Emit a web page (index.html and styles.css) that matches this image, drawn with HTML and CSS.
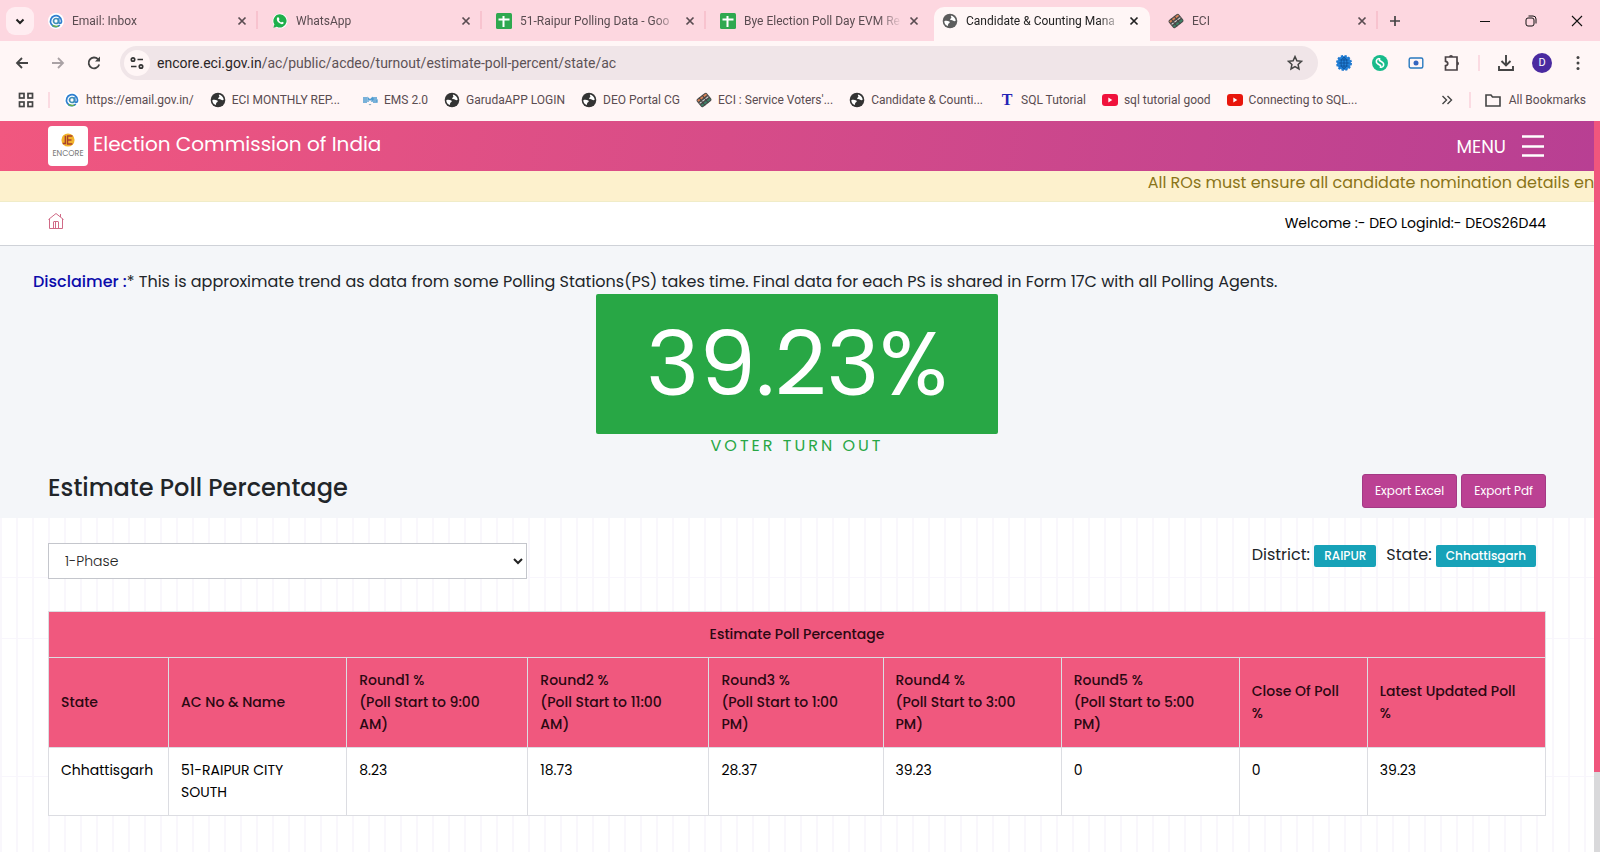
FILE: index.html
```html
<!DOCTYPE html>
<html lang="en">
<head>
<meta charset="utf-8">
<title>Candidate &amp; Counting Management</title>
<link rel="stylesheet" href="styles.css">
</head>
<body>
<svg class="sprite" aria-hidden="true">
  <symbol id="x" viewBox="0 0 12 12"><path d="M2.500 2.500l7 7M9.500 2.500l-7 7" fill="none" stroke="currentColor" stroke-width="1.700"/></symbol>
  <symbol id="at" viewBox="0 0 16 16"><circle cx="8" cy="8" r="8" fill="#fff"/><path d="M11.800 12.200A5.500 5.500 0 1 1 13.500 8c0 1.600-.7 2.400-1.600 2.400S10.700 9.600 10.700 8.600V5.300" fill="none" stroke="#2f7fd0" stroke-width="1.700"/><circle cx="8" cy="8" r="2.500" fill="none" stroke="#3e8fb8" stroke-width="1.700"/><path d="M4.500 12.300q3 1.800 6 .9" fill="none" stroke="#69b04a" stroke-width="1.400"/></symbol>
  <symbol id="globe" viewBox="0 0 16 16"><circle cx="8" cy="8" r="7.300" fill="currentColor"/><path d="M2.300 8.200C4 7.400 6 7.900 7.300 8.500c1 .6.400 1.500-.6 1.900-.9.500-.4 1.400-.9 2.700C3.500 12.300 2.300 10.400 2.300 8.200zM9 2.400c2.700.6 4.500 2.700 4.700 5.300-1.100.9-2 .2-2.900-.2-1-.3-2.300.2-2.700-.9C7.900 5.500 9.600 5.700 9.400 4.600 9.200 3.700 8.600 3.300 9 2.400z" fill="#fff"/></symbol>
  <symbol id="sheet" viewBox="0 0 16 16"><rect width="16" height="16" rx="1.500" fill="#2fa84f"/><path d="M2.500 6.500h11M7.500 3v11" stroke="#fff" stroke-width="2"/></symbol>
  <symbol id="wa" viewBox="0 0 16 16"><circle cx="8" cy="8" r="7.500" fill="#fff"/><path d="M8 1.300a6.600 6.600 0 1 1-3.200 12.400L1.400 14.700l1-3.300A6.600 6.600 0 0 1 8 1.300z" fill="#1faf4b"/><path d="M5.700 4.300c-1.800 1.500-.5 4 .9 5.300s3.800 2.500 5 .7c.3-.5 0-.8-.4-1l-1.200-.6-.9.800C8.200 9.200 7.200 8.200 6.800 7.100l.7-.9-.6-1.500c-.2-.5-.7-.7-1.200-.4z" fill="#fff"/></symbol>
  <symbol id="eci" viewBox="0 0 16 16"><g transform="rotate(-38 8 8)"><rect x="1.500" y="3" width="13" height="10" rx="2" fill="#4b4b4b"/><path d="M2.500 5h11" stroke="#d98256" stroke-width="1.800"/><path d="M2.500 8h11" stroke="#ddd" stroke-width="1"/><path d="M2.500 11h11" stroke="#3b8468" stroke-width="1.800"/><path d="M5.500 3v10M9.500 3v10" stroke="#444" stroke-width="1"/></g></symbol>
  <symbol id="yt" viewBox="0 0 16 12"><rect width="16" height="12" rx="3" fill="currentColor"/><path d="M6.300 3.500v5l4-2.500z" fill="#fff"/></symbol>
</svg>

<header class="browser">
  <div class="tabstrip">
    <button class="tabsearch" aria-label="Search tabs"><svg width="12" height="12" viewBox="0 0 12 12"><path d="M2.500 4.500L6 8l3.500-3.500" fill="none" stroke="#222" stroke-width="2"/></svg></button>
    <div class="tab"><svg class="fav"><use href="#at"/></svg><span class="tabtext">Email: Inbox</span><button class="tabclose" aria-label="Close"><svg><use href="#x"/></svg></button></div>
    <div class="tab"><svg class="fav"><use href="#wa"/></svg><span class="tabtext">WhatsApp</span><button class="tabclose" aria-label="Close"><svg><use href="#x"/></svg></button></div>
    <div class="tab"><svg class="fav"><use href="#sheet"/></svg><span class="tabtext">51-Raipur Polling Data - Goo</span><button class="tabclose" aria-label="Close"><svg><use href="#x"/></svg></button></div>
    <div class="tab nosep"><svg class="fav"><use href="#sheet"/></svg><span class="tabtext">Bye Election Poll Day EVM Re</span><button class="tabclose" aria-label="Close"><svg><use href="#x"/></svg></button></div>
    <div class="tab active"><svg class="fav grey"><use href="#globe"/></svg><span class="tabtext">Candidate &amp; Counting Mana</span><button class="tabclose" aria-label="Close"><svg><use href="#x"/></svg></button></div>
    <div class="tab"><svg class="fav"><use href="#eci"/></svg><span class="tabtext">ECI</span><button class="tabclose" aria-label="Close"><svg><use href="#x"/></svg></button></div>
    <button class="newtab" aria-label="New tab"><svg width="14" height="14" viewBox="0 0 14 14"><path d="M7 2v10M2 7h10" stroke="#444" stroke-width="1.700"/></svg></button>
    <div class="wincontrols">
      <button aria-label="Minimise"><svg width="14" height="14" viewBox="0 0 14 14"><path d="M2 7.500h10" stroke="#111"/></svg></button>
      <button aria-label="Restore"><svg width="14" height="14" viewBox="0 0 14 14" fill="none" stroke="#111"><rect x="2" y="4" width="8" height="8" rx="2"/><path d="M4.500 2h4.500a3 3 0 0 1 3 3v4.500"/></svg></button>
      <button aria-label="Close window"><svg width="14" height="14" viewBox="0 0 14 14"><path d="M2 2l10 10M12 2L2 12" stroke="#111" stroke-width="1.100"/></svg></button>
    </div>
  </div>

  <div class="toolbar">
    <button class="tool" aria-label="Back"><svg width="16" height="16" viewBox="0 0 16 16"><path d="M14 8H3M8 3L3 8l5 5" fill="none" stroke="#444" stroke-width="1.800"/></svg></button>
    <button class="tool" aria-label="Forward"><svg width="16" height="16" viewBox="0 0 16 16"><path d="M2 8h11M8 3l5 5-5 5" fill="none" stroke="#aaa2a5" stroke-width="1.800"/></svg></button>
    <button class="tool" aria-label="Reload"><svg width="16" height="16" viewBox="0 0 16 16"><path d="M13.200 9.500A5.400 5.400 0 1 1 12 4.200L13 5.300" fill="none" stroke="#444" stroke-width="1.800"/><path d="M14 1.500v5H9z" fill="#444"/></svg></button>
    <div class="omnibox">
      <button class="siteinfo" aria-label="Site information"><svg width="16" height="16" viewBox="0 0 16 16" fill="none" stroke="#333" stroke-width="1.700"><circle cx="4" cy="4.500" r="1.700"/><path d="M8.500 4.500H14M2 11.500h5.500"/><circle cx="12" cy="11.500" r="1.700"/></svg></button>
      <p class="url">encore.eci.gov.in<span>/ac/public/acdeo/turnout/estimate-poll-percent/state/ac</span></p>
      <button class="star" aria-label="Bookmark"><svg width="16" height="16" viewBox="0 0 16 16"><path d="M8 1.600l1.900 4.200 4.600.5-3.400 3.100.9 4.600L8 11.700 4 14l.9-4.600L1.500 6.300l4.600-.5z" fill="none" stroke="#444" stroke-width="1.500"/></svg></button>
    </div>
    <div class="extensions">
      <button class="tool" aria-label="Globe extension"><svg width="16" height="16" viewBox="0 0 16 16"><circle cx="8" cy="8" r="7" fill="#2484dc" stroke="#1f78cf" stroke-width="2" stroke-dasharray="2.200 1.500"/><path d="M2.500 8h11M3.500 5h9M3.500 11h9M8 2.500v11" stroke="#0d4d92" fill="none" stroke-width=".8"/><ellipse cx="8" cy="8" rx="3" ry="5.500" fill="none" stroke="#0d4d92" stroke-width=".8"/></svg></button>
      <button class="tool" aria-label="Sync extension"><svg width="16" height="16" viewBox="0 0 16 16"><circle cx="8" cy="8" r="8" fill="#18bb8b"/><path d="M7 3.500C4 4 3.200 7.500 6 9l2.500 1.500V13M9 12.500c3-.5 3.800-4 1-5.500L7.500 5.500V3" fill="none" stroke="#fff" stroke-width="1.600"/></svg></button>
      <button class="tool" aria-label="Capture extension"><svg width="16" height="16" viewBox="0 0 16 16"><rect x="1.200" y="3" width="13.600" height="10" rx="1.500" fill="none" stroke="#2a7abf" stroke-width="1.400"/><circle cx="8" cy="8" r="2.500" fill="#3465c0"/></svg></button>
      <button class="tool" aria-label="Extensions"><svg width="18" height="18" viewBox="0 0 18 18"><path d="M2.500 3h11.500v13H2.500v-4.300c3-.4 3-4 0-4.400z" fill="none" stroke="#4a4245" stroke-width="1.700"/><path d="M6 3a2 2 0 0 1 4 0zM14 7.500a2 2 0 0 1 0 4z" fill="#4a4245"/></svg></button>
      <i class="divider"></i>
      <button class="tool" aria-label="Downloads"><svg width="18" height="18" viewBox="0 0 18 18"><path d="M9 1v10M4.500 7L9 11.500 13.500 7M2 12v4h14v-4" fill="none" stroke="#444" stroke-width="1.900"/></svg></button>
      <button class="tool avatar" aria-label="Profile">D</button>
      <button class="tool" aria-label="Browser menu"><svg width="16" height="16" viewBox="0 0 16 16" fill="#444"><circle cx="8" cy="2.500" r="1.500"/><circle cx="8" cy="8" r="1.500"/><circle cx="8" cy="13.500" r="1.500"/></svg></button>
    </div>
  </div>

  <nav class="bookmarks">
    <button class="tool" aria-label="Apps"><svg width="16" height="16" viewBox="0 0 16 16" fill="none" stroke="#444" stroke-width="1.700"><rect x="1.500" y="1.500" width="4.500" height="4.500"/><rect x="10" y="1.500" width="4.500" height="4.500"/><rect x="1.500" y="10" width="4.500" height="4.500"/><rect x="10" y="10" width="4.500" height="4.500"/></svg></button>
    <i class="divider"></i>
    <a href="#"><svg class="bico"><use href="#at"/></svg>https://email.gov.in/</a>
    <a href="#"><svg class="bico"><use href="#globe"/></svg>ECI MONTHLY REP...</a>
    <a href="#" class="late"><svg class="bico" viewBox="0 0 16 16"><path d="M1 6h4M1 8h4M1 10h4M6 10V6l2 2 2-2v4M15 6h-4v2h4v2h-4" fill="none" stroke="#4d9bd0" stroke-width="1.300"/><path d="M6.500 12h3L8 13.500z" fill="#8ab"/></svg>EMS 2.0</a>
    <a href="#"><svg class="bico"><use href="#globe"/></svg>GarudaAPP LOGIN</a>
    <a href="#"><svg class="bico"><use href="#globe"/></svg>DEO Portal CG</a>
    <a href="#"><svg class="bico"><use href="#eci"/></svg>ECI : Service Voters'...</a>
    <a href="#"><svg class="bico"><use href="#globe"/></svg>Candidate &amp; Counti...</a>
    <a href="#"><b class="tmark">T</b>SQL Tutorial</a>
    <a href="#"><svg class="bico crimson"><use href="#yt"/></svg>sql tutorial good</a>
    <a href="#"><svg class="bico red"><use href="#yt"/></svg>Connecting to SQL...</a>
    <div class="bookend">
      <button class="tool" aria-label="More bookmarks"><svg width="12" height="12" viewBox="0 0 12 12"><path d="M1.500 2l4 4-4 4M6.500 2l4 4-4 4" fill="none" stroke="#444" stroke-width="1.400"/></svg></button>
      <i class="divider"></i>
      <a href="#"><svg class="bico" viewBox="0 0 16 16"><path d="M1 3h5l1.500 2H15v9H1z" fill="none" stroke="#444" stroke-width="1.600"/></svg>All Bookmarks</a>
    </div>
  </nav>
</header>

<div class="viewport">
  <div class="page">
    <header class="masthead">
      <a class="logo" href="#" aria-label="Encore">
        <svg width="14" height="14" viewBox="0 0 16 16"><circle cx="8" cy="8" r="7.500" fill="#f2b32b"/><path d="M5 3v9H2M7 3.500h6M7 8h5M7 12.500h6M7.500 3v10" fill="none" stroke="#a8412c" stroke-width="1.600"/></svg>
        <span>ENCORE</span>
      </a>
      <span class="org">Election Commission of India</span>
      <button class="menu">MENU <svg width="24" height="24" viewBox="0 0 24 24"><path d="M0 2.500h22M0 12.500h22M0 21.500h22" stroke="#fff" stroke-width="2.500"/></svg></button>
    </header>

    <div class="notice"><p>All ROs must ensure all candidate nomination details en</p></div>

    <div class="welcome">
      <a href="#" aria-label="Home"><svg width="16" height="18" viewBox="0 0 16 18" fill="none" stroke="#d06a86"><path d="M.5 7.500l7.500-6 7.500 6M1.500 7v9.500h13V7M12.500 5V2M5.500 16.500V10M7.500 16.500V9.500M10.500 16.500V10M5.500 9.500h5"/></svg></a>
      <p>Welcome :- DEO LoginId:- DEOS26D44</p>
    </div>

    <section class="summary">
      <p class="disclaimer"><b>Disclaimer :</b>* This is approximate trend as data from some Polling Stations(PS) takes time. Final data for each PS is shared in Form 17C with all Polling Agents.</p>
      <div class="turnout"><strong>39.23%</strong><span>VOTER TURN OUT</span></div>
      <div class="titlebar">
        <h1>Estimate Poll Percentage</h1>
        <div class="exports"><button>Export Excel</button><button>Export Pdf</button></div>
      </div>
    </section>

    <main class="content">
      <div class="filters">
        <select aria-label="Phase"><option>1-Phase</option></select>
        <p class="place"><span>District: <mark>RAIPUR</mark></span><span>State: <mark>Chhattisgarh</mark></span></p>
      </div>
      <table>
        <colgroup><col class="c-state"><col class="c-name"><col class="c-round"><col class="c-round"><col class="c-third"><col class="c-name"><col class="c-name"><col class="c-close"><col class="c-name"></colgroup>
        <thead>
          <tr><th colspan="9" class="caption">Estimate Poll Percentage</th></tr>
          <tr>
            <th>State</th><th>AC No &amp; Name</th>
            <th>Round1 %<br>(Poll Start to 9:00<br>AM)</th>
            <th>Round2 %<br>(Poll Start to 11:00<br>AM)</th>
            <th>Round3 %<br>(Poll Start to 1:00<br>PM)</th>
            <th>Round4 %<br>(Poll Start to 3:00<br>PM)</th>
            <th>Round5 %<br>(Poll Start to 5:00<br>PM)</th>
            <th>Close Of Poll<br>%</th><th>Latest Updated Poll<br>%</th>
          </tr>
        </thead>
        <tbody>
          <tr><td>Chhattisgarh</td><td>51-RAIPUR CITY<br>SOUTH</td><td>8.23</td><td>18.73</td><td>28.37</td><td>39.23</td><td>0</td><td>0</td><td>39.23</td></tr>
        </tbody>
      </table>
    </main>
  </div>
  <div class="scrollbar"><i></i></div>
</div>
</body>
</html>
```

FILE: styles.css
```css
* { box-sizing: border-box; }
html, body { height: 100%; }
body {
  margin: 0;
  display: flex;
  flex-direction: column;
  overflow: hidden;
  font-family: Poppins, Inter, sans-serif;
  color: #212529;
}
p, h1 { margin: 0; }
button { border: 0; padding: 0; background: none; font: inherit; color: inherit; }
a { color: inherit; text-decoration: none; }
.sprite { position: absolute; width: 0; height: 0; }

/* Browser frame */
.browser {
  flex: none;
  background: #fff6f6;
  color: #5a4c51;
  font: 12px/16px "Segoe UI", Roboto, sans-serif;
}
.tabstrip { display: flex; align-items: center; height: 41px; padding-left: 6px; background: #fdd7e0; }
.tabsearch {
  width: 28px; height: 28px;
  display: grid; place-items: center;
  border-radius: 9px;
  background: #ffedf1;
}
.tab {
  width: 224px; height: 34px;
  display: flex; align-items: center;
  margin-top: 7px; padding: 0 8px 7px 14px;
  background: linear-gradient(#f8c3cf, #f8c3cf) right 4px / 2px 18px no-repeat;
}
.tabclose, .fav { flex: none; }
.tab.nosep { background: none; }
.tab.active {
  width: 216px;
  background: #fff6f6;
  color: #222;
  border-radius: 10px 10px 0 0;
  margin-left: 4px; margin-right: 4px;
  padding-left: 8px;
}
.fav { width: 16px; height: 16px; margin-right: 8px; }
.fav.grey { color: #5c5c5c; }
.tabtext {
  flex: 1;
  overflow: hidden;
  white-space: nowrap;
  margin-right: 4px;
  -webkit-mask-image: linear-gradient(90deg, #000 85%, transparent);
  mask-image: linear-gradient(90deg, #000 85%, transparent);
}
.tabclose { width: 16px; height: 16px; display: grid; place-items: center; }
.tabclose svg { width: 12px; height: 12px; }
.newtab { width: 34px; height: 28px; display: grid; place-items: center; }
.wincontrols { display: flex; margin-left: auto; }
.wincontrols button { width: 46px; height: 40px; display: grid; place-items: center; }

.toolbar { display: flex; align-items: center; height: 44px; padding: 0 4px; }
.tool { width: 36px; height: 32px; display: grid; place-items: center; flex: none; }
.omnibox {
  flex: 1;
  display: flex; align-items: center;
  height: 34px;
  margin-left: 8px; padding: 0 10px 0 4px;
  border-radius: 17px;
  background: #f0e5e8;
}
.siteinfo { width: 26px; height: 26px; display: grid; place-items: center; border-radius: 50%; background: #fff6f6; }
.url { flex: 1; margin-left: 7px; font-size: 14px; color: #2a2426; }
.url span { color: #5d5256; }
.star { width: 26px; height: 26px; display: grid; place-items: center; }
.extensions { display: flex; align-items: center; margin-left: 8px; }
.divider { width: 2px; height: 16px; background: #fbdbe2; flex: none; }
.extensions .divider { margin: 0 8px; }
.avatar { width: 20px; height: 20px; margin: 0 8px; border-radius: 50%; background: #4a2aa0; color: #fff; font-size: 11px; }

.bookmarks { display: flex; align-items: center; height: 36px; padding: 0 14px 6px 8px; white-space: nowrap; }
.bookmarks .divider { margin: 0 14px 0 4px; }
.bookmarks a { display: flex; align-items: center; margin-right: 16px; }
.bookmarks a.late { margin-left: 6px; }
.bico { width: 16px; height: 16px; margin-right: 6px; flex: none; color: #333; }
.crimson { color: #f0123c; }
.red { color: #e8160c; }
.tmark { width: 16px; margin-right: 6px; text-align: center; font: bold 16px/16px "Liberation Serif", serif; color: #2323b5; }
.bookend { display: flex; align-items: center; margin-left: auto; }
.bookend .bico { margin-right: 8px; }
.bookmarks .bookend a { margin-right: 0; }

/* Page */
.viewport { flex: 1; min-height: 0; display: flex; }
.page { flex: 1; min-width: 0; overflow: hidden; display: flex; flex-direction: column; }
.scrollbar { width: 6px; background: #d9d9db; }
.scrollbar i { display: block; height: 89%; background: #f0567d; }

.masthead {
  display: flex; align-items: center;
  height: 50px; flex: none;
  padding: 0 48px;
  background: linear-gradient(100deg, #f1577f, #b83f93);
  color: #fff;
}
.logo {
  width: 40px; height: 40px;
  display: flex; flex-direction: column; align-items: center; justify-content: center;
  gap: 2px;
  border-radius: 4px;
  background: #fff;
  color: #777;
  font-size: 8px; line-height: 10px;
}
.org { margin: 0 auto 4px 5px; font-size: 20px; line-height: 30px; }
.menu { display: flex; align-items: center; gap: 16px; font-size: 18px; }

.notice { height: 31px; flex: none; background: #fdf1cd; color: #8a7418; border-bottom: 1px solid #f0ecc8; }
.notice p { margin-left: 72%; font-size: 16px; line-height: 24px; white-space: nowrap; }

.welcome {
  display: flex; align-items: center; justify-content: space-between;
  height: 44px; flex: none;
  padding: 0 48px;
  border-bottom: 1px solid #cfd2d8;
  background: #fff;
  color: #000;
  font-size: 14px;
}

.summary { padding: 24px 48px 10px; background: #f4f6f9; }
.disclaimer { margin: 0 -15px; font-size: 16px; line-height: 24px; }
.disclaimer b { font-weight: 500; color: #0b0bab; }
.turnout { display: flex; flex-direction: column; align-items: center; }
.turnout strong {
  padding: 0 50px;
  border-radius: 2px;
  background: #28a745;
  color: #fff;
  font-size: 90px; font-weight: 400; line-height: 140px;
}
.turnout span { font-size: 16px; line-height: 24px; letter-spacing: 3px; color: #28a745; }
.titlebar { display: flex; align-items: center; justify-content: space-between; margin-top: 16px; }
h1 { font-size: 24px; font-weight: 500; line-height: 28px; padding-bottom: 6px; }
.exports { display: flex; gap: 4px; }
.exports button {
  height: 34px;
  padding: 0 12px;
  border: 1px solid #a33a85;
  border-radius: 3px;
  background: #bb4193;
  color: #fff;
  font-size: 12px;
}

.content {
  flex: 1;
  padding: 25px 48px;
  background-color: #fff;
  background-image:
    linear-gradient(#f8f6fc, #f8f6fc), linear-gradient(#f8f6fc, #f8f6fc), linear-gradient(#f8f6fc, #f8f6fc),
    repeating-linear-gradient(90deg, #f9f7fc 0 2px, transparent 2px 16px);
  background-size: 100% 1px, 100% 1px, 100% 1px, auto;
  background-position: 0 59px, 0 120px, 0 258px, 0 0;
  background-repeat: no-repeat, no-repeat, no-repeat, repeat;
}
.filters { display: flex; justify-content: space-between; align-items: flex-start; }
select {
  width: 32%; height: 36px;
  padding: 0 0 0 12px;
  border: 1px solid #c4c6cc;
  border-radius: 0;
  background: #fff;
  color: #222;
  font: 300 14px/20px Poppins, Inter, sans-serif;
}
.place { display: flex; gap: 10px; padding-right: 10px; font-size: 16px; line-height: 24px; }
mark {
  display: inline-block;
  padding: 0 10px;
  border-radius: 2px;
  background: #17a2b8;
  color: #fff;
  font-size: 12px; font-weight: 500; line-height: 22px;
}

table {
  width: 100%;
  margin-top: 32px;
  border-collapse: collapse;
  table-layout: fixed;
  background: #fff;
  color: #000;
  font-size: 14px; line-height: 22px;
}
th, td { border: 1px solid #dcdde2; padding: 11px 12px 12px; text-align: left; }
th { background: #f0587e; font-weight: 500; color: #2b0812; }
td { vertical-align: top; }
.caption { text-align: center; }
.c-state { width: 120px; }
.c-name { width: 178px; }
.c-round { width: 181px; }
.c-third { width: 174px; }
.c-close { width: 128px; }
```
